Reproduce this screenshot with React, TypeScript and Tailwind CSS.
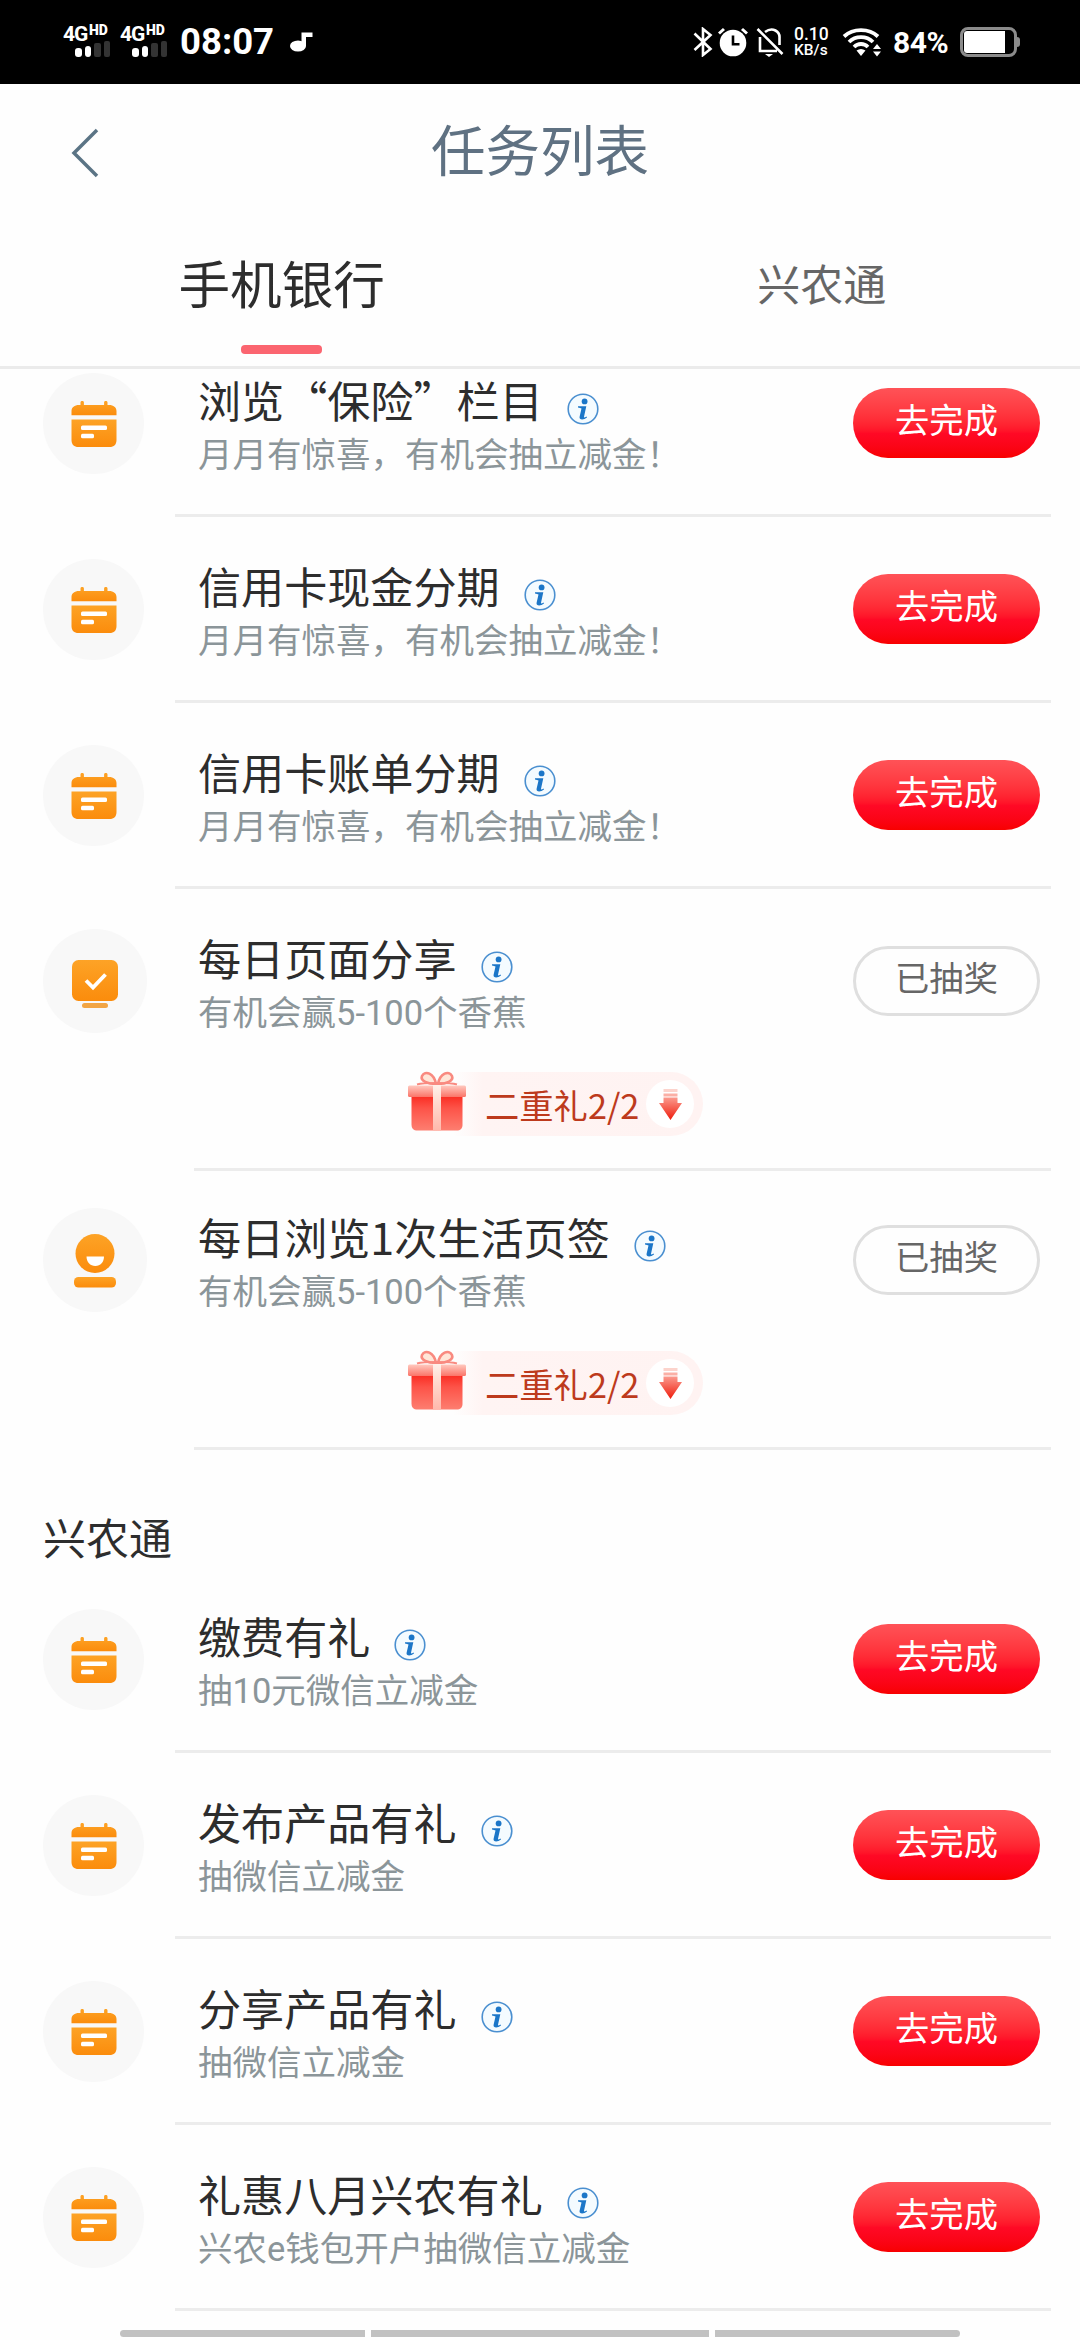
import { useState } from "react";

type IconName = "calendar" | "screen" | "smile";

interface Task {
  id: number;
  title: string;
  desc: string;
  icon: IconName;
  done?: boolean;
  gift?: string;
}

const bankTasks: Task[] = [
  { id: 1, title: "浏览“保险”栏目", desc: "月月有惊喜，有机会抽立减金！", icon: "calendar" },
  { id: 2, title: "信用卡现金分期", desc: "月月有惊喜，有机会抽立减金！", icon: "calendar" },
  { id: 3, title: "信用卡账单分期", desc: "月月有惊喜，有机会抽立减金！", icon: "calendar" },
  { id: 4, title: "每日页面分享", desc: "有机会赢5-100个香蕉", icon: "screen", done: true, gift: "二重礼2/2" },
  { id: 5, title: "每日浏览1次生活页签", desc: "有机会赢5-100个香蕉", icon: "smile", done: true, gift: "二重礼2/2" },
];

const farmTasks: Task[] = [
  { id: 6, title: "缴费有礼", desc: "抽10元微信立减金", icon: "calendar" },
  { id: 7, title: "发布产品有礼", desc: "抽微信立减金", icon: "calendar" },
  { id: 8, title: "分享产品有礼", desc: "抽微信立减金", icon: "calendar" },
  { id: 9, title: "礼惠八月兴农有礼", desc: "兴农e钱包开户抽微信立减金", icon: "calendar" },
];

function Gradients() {
  return (
    <svg width="0" height="0" className="absolute">
      <defs>
        <linearGradient id="orange" x1="0" y1="0" x2="0" y2="1">
          <stop offset="0" stopColor="#fda326" />
          <stop offset="1" stopColor="#fb8c0c" />
        </linearGradient>
        <linearGradient id="lid" x1="0" y1="0" x2="0" y2="1">
          <stop offset="0" stopColor="#ffc9bf" />
          <stop offset="1" stopColor="#fb7468" />
        </linearGradient>
        <linearGradient id="box" x1="0" y1="0" x2="0" y2="1">
          <stop offset="0" stopColor="#fa2c22" />
          <stop offset="0.35" stopColor="#fd5348" />
          <stop offset="1" stopColor="#fd7e70" />
        </linearGradient>
        <linearGradient id="ribbon" x1="0" y1="0" x2="0" y2="1">
          <stop offset="0" stopColor="#fff1ea" />
          <stop offset="0.4" stopColor="#ffd9ce" />
          <stop offset="1" stopColor="#ffb9ac" />
        </linearGradient>
        <linearGradient id="arrow" x1="0" y1="0" x2="0" y2="1">
          <stop offset="0" stopColor="#fb9a8e" />
          <stop offset="1" stopColor="#ef1c0c" />
        </linearGradient>
      </defs>
    </svg>
  );
}

function Signal() {
  return (
    <div className="flex w-[47px] flex-col font-[Roboto] text-white">
      <div className="flex h-[16px] items-start">
        <span className="w-[26px] text-[21px] leading-[18px] font-bold tracking-[-1px]">4G</span>
        <span className="text-[14px] leading-[11px] font-black">HD</span>
      </div>
      <div className="ml-[12px] flex h-[16px] items-end gap-[3px]">
        <i className="h-[9px] w-[6.5px] rounded-[3px] bg-white" />
        <i className="h-[11px] w-[6.5px] rounded-[3px] bg-white" />
        <i className="h-[14px] w-[6.5px] rounded-[2px] bg-[#333]" />
        <i className="h-[16px] w-[6.5px] rounded-[2px] bg-[#333]" />
      </div>
    </div>
  );
}

function StatusBar() {
  return (
    <header className="flex h-[84px] shrink-0 items-center bg-black pl-[63px] font-[Roboto] text-white">
      <div className="flex gap-[10px] pb-[3px]">
        <Signal />
        <Signal />
      </div>
      <span className="ml-[13px] w-[96px] text-[36.5px] leading-[84px] font-bold">08:07</span>
      <svg width="24" height="20" viewBox="0 0 24 20" fill="#fff" className="ml-[13px]">
        <ellipse cx="9" cy="14" rx="8" ry="5.6" />
        <path d="M12.5 0.5h11v4.5h-6.5v9h-4.5z" />
      </svg>
      <div className="ml-auto flex items-center pr-[60px]">
        <svg width="20" height="30" viewBox="0 0 20 30" fill="none" stroke="#fff" strokeWidth="2.6">
          <path d="M1.5 6.500l16 15.500-7.500 6V2l7.500 6L1.500 23" />
        </svg>
        <svg width="30" height="30" viewBox="0 0 30 30" className="ml-[5px]">
          <circle cx="15" cy="16" r="13.3" fill="#fff" />
          <path d="M1 6.500l5-4.500M29 6.500L24 2" stroke="#fff" strokeWidth="3" />
          <path d="M15 8.500v8.800h6.500" stroke="#000" strokeWidth="2.6" fill="none" />
        </svg>
        <svg width="28" height="30" viewBox="0 0 28 30" className="ml-[8px]" fill="none" stroke="#fff" strokeWidth="2.6">
          <path d="M1.500 2l25 25M4 10v14h17M9 5c8-6 15 0 14.500 6v7" />
          <path d="M9 27h8l-4 3z" fill="#fff" stroke="none" />
        </svg>
        <div className="ml-[10px] flex w-[36px] flex-col text-[17.5px] leading-[16px] font-medium">
          <span>0.10</span>
          <span className="text-[15.5px]">KB/s</span>
        </div>
        <svg width="40" height="30" viewBox="0 0 40 30" className="ml-[12px]" fill="none" stroke="#fff" strokeWidth="3.8">
          <path d="M2 9.500c9-8.500 25-8.500 34 0M7 15c6.500-6.500 17.500-6.500 24 0M12 20c4-4 10-4 14 0" />
          <path d="M14.500 23.500c3-2 6-2 9 0L19 29z" fill="#fff" stroke="none" />
          <path d="M31 22l4-5 4 5zM31 24.500l4 5 4-5z" fill="#fff" stroke="none" />
        </svg>
        <span className="ml-[11px] w-[60px] text-[30px] font-bold tracking-[-0.5px]">84%</span>
        <div className="ml-[7px] flex h-[30px] w-[57px] rounded-[8px] border-[3px] border-[#8b8b8b] p-[1px]">
          <i className="w-[41px] rounded-l-[3px] bg-white" />
        </div>
        <i className="h-[10px] w-[3px] rounded-r bg-[#8b8b8b]" />
      </div>
    </header>
  );
}

function TaskIcon({ name }: { name: IconName }) {
  if (name === "calendar") {
    return (
      <div className="mt-[42px] flex h-[101px] w-[101px] items-center justify-center rounded-full bg-[#f8f8f8]">
        <svg width="46" height="46" viewBox="0 0 46 46" className="mt-[1px]">
          <path
            d="M9.500 1.200c0-1.600 3.400-1.600 3.400 0V4h20.200V1.200c0-1.600 3.400-1.600 3.400 0V4H38c4.500 0 7.500 2.500 7.500 6v4.200H.5V10C.5 6.500 3.500 4 8 4h1.500z"
            fill="url(#orange)"
          />
          <path d="M.5 18.500h45V39c0 4.500-2.500 7-7 7h-31c-4.500 0-7-2.500-7-7z" fill="url(#orange)" />
          <rect x="10" y="24.500" width="26" height="4.600" rx="1.500" fill="#fff" />
          <rect x="10" y="32.700" width="13" height="4.600" rx="1.500" fill="#fff" />
        </svg>
      </div>
    );
  }
  return (
    <div className="mt-[40px] flex h-[104px] w-[104px] items-center justify-center rounded-full bg-[#f8f8f8]">
      {name === "screen" ? (
        <svg width="46" height="48" viewBox="0 0 46 48" className="mt-[6px]">
          <rect width="46" height="41" rx="6.500" fill="url(#orange)" />
          <path d="M14 20.500l7 7 12.500-13" fill="none" stroke="#fff" strokeWidth="3.800" />
          <rect x="10" y="43" width="26" height="5" rx="2.500" fill="#f2a544" />
        </svg>
      ) : (
        <svg width="42" height="54" viewBox="0 0 42 54" className="mt-[2px]">
          <circle cx="21" cy="19.500" r="19.500" fill="url(#orange)" />
          <path d="M12.500 22.500h17.500c0 5.500-3.500 9.500-8.700 9.500s-8.800-4-8.800-9.500z" fill="#fff" />
          <rect y="43" width="42" height="10.500" rx="4.500" fill="url(#orange)" />
        </svg>
      )}
    </div>
  );
}

function InfoIcon() {
  return (
    <svg width="32" height="32" viewBox="0 0 32 32" className="mt-[21px] ml-[24px]">
      <circle cx="16" cy="16" r="14.800" fill="#f4fbff" stroke="#4a8fd0" strokeWidth="1.600" />
      <circle cx="17.600" cy="8.400" r="2.900" fill="#1b76c8" />
      <path
        d="M11 13.200h8.300L17 23.800c-.2 1 .8.900 2.500-.3l.5 1c-3.200 2.800-8.200 2.700-7.400-.8l1.900-8.200c-.8-.6-2-.9-3.500-1.100z"
        fill="#1b76c8"
      />
    </svg>
  );
}

function GiftBadge({ label }: { label: string }) {
  return (
    <div className="mt-[33px] ml-[209px] flex h-[66px] w-[296px] items-center">
      <svg width="60" height="62" viewBox="0 0 60 62" className="z-10 mb-[4px]">
        <path
          d="M29 13C21 13 13 10 15 5c3-6 12-3 14 8zM31 13c8 0 16-3 14-8-3-6-12-3-14 8z"
          fill="#ffe6d8"
          stroke="#f98a80"
          strokeWidth="2.600"
        />
        <path d="M10 13.500c7-2 33-2 40 0" stroke="#f98a80" strokeWidth="2" fill="none" />
        <path d="M4.500 25h51v28.500c0 4-2 6-6 6h-39c-4 0-6-2-6-6z" fill="url(#box)" />
        <rect x="1" y="14.500" width="58" height="11.500" rx="1.500" fill="url(#lid)" />
        <rect x="26" y="14" width="8" height="45.500" fill="url(#ribbon)" />
      </svg>
      <div className="-ml-[14px] flex h-[64px] flex-1 items-center rounded-r-full bg-linear-to-r from-[#fefefe] via-[#fff4f3] via-12% to-[#fff3f2] pl-[32px]">
        <span className="w-[154px] text-[34.3px] leading-[50px] whitespace-nowrap text-[#bd3a1c]">{label}</span>
        <i className="ml-[7px] flex h-[48px] w-[48px] items-center justify-center rounded-full bg-white">
          <svg width="24" height="31" viewBox="0 0 24 31">
            <path d="M5.500 0h14v3h-14z" fill="#fcd3cc" />
            <path d="M5.500 4.500h14v3h-14z" fill="#fbb0a6" />
            <path d="M5.500 8.500h14V14H24L12.500 31 1 14h4.500z" fill="url(#arrow)" />
          </svg>
        </i>
      </div>
    </div>
  );
}

function TaskRow({ task }: { task: Task }) {
  return (
    <li className={task.gift ? "h-[279px] shrink-0 pl-[43px]" : "h-[186px] shrink-0 pl-[43px]"}>
      <div className={task.gift ? "flex h-[279px]" : "flex h-[183px]"}>
        <div className="w-[155px] shrink-0">
          <TaskIcon name={task.icon} />
        </div>
        <div className="w-[655px] shrink-0 pt-[41px]">
          <div className="flex h-[58px]">
            <h3 className="text-[43.1px] leading-[54px] whitespace-nowrap text-[#2d2d2d]">{task.title}</h3>
            <InfoIcon />
          </div>
          <p className="h-[50px] font-[Roboto,'Noto_Sans_CJK_SC',sans-serif] text-[34.5px] leading-[50px] whitespace-nowrap text-[#8b9599]">
            {task.desc}
          </p>
          {task.gift && <GiftBadge label={task.gift} />}
        </div>
        {task.done ? (
          <button className="mt-[57px] flex h-[70px] w-[187px] items-center justify-center rounded-full border-[3px] border-[#dfdfdf] pb-[8px] text-[34.3px] text-[#666]">
            已抽奖
          </button>
        ) : (
          <button className="mt-[57px] flex h-[70px] w-[187px] items-center justify-center rounded-full bg-linear-to-b from-[#ff5257] via-[#ff0925] via-65% to-[#f80000] pb-[9px] text-[34.3px] text-white">
            去完成
          </button>
        )}
      </div>
      <hr
        className={
          task.gift
            ? "mr-[29px] ml-[151px] border-t-[3px] border-[#ececec]"
            : "mr-[29px] ml-[132px] border-t-[3px] border-[#ececec]"
        }
      />
    </li>
  );
}

export default function App() {
  const [tab, setTab] = useState("手机银行");

  return (
    <main
      lang="zh-CN"
      className="flex h-[2340px] w-[1080px] flex-col overflow-hidden bg-[#fefefe] font-['Noto_Sans_CJK_SC',sans-serif]"
    >
      <Gradients />
      <StatusBar />

      <div className="flex h-[134px] shrink-0 items-center pl-[70px]">
        <svg width="30" height="50" viewBox="0 0 30 50" fill="none" stroke="#5b7485" strokeWidth="3.500" className="mt-[4px]">
          <path d="M27 2L4 25l23 23" />
        </svg>
        <h1 className="ml-[331px] pb-[6px] text-[54.5px] leading-[60px] text-[#5f7182]">任务列表</h1>
      </div>

      <nav className="flex h-[151px] shrink-0 border-b-[3px] border-[#ebebeb]">
        <button onClick={() => setTab("手机银行")} className="flex w-[565px] flex-col items-center pt-[34px]">
          <span className="text-[51.6px] leading-[60px] text-[#2d2d2d]">手机银行</span>
          {tab === "手机银行" && <i className="mt-[33px] h-[9px] w-[81px] rounded-[4px] bg-[#fb6570]" />}
        </button>
        <button onClick={() => setTab("兴农通")} className="flex w-[518px] flex-col items-center pt-[34px]">
          <span className="text-[43px] leading-[60px] text-[#666]">兴农通</span>
          {tab === "兴农通" && <i className="mt-[33px] h-[9px] w-[81px] rounded-[4px] bg-[#fb6570]" />}
        </button>
      </nav>

      <div className="h-[1950px] shrink-0 overflow-hidden">
        {/* list is scrolled a little under the tabs */}
        <ul className="-mt-[38px] flex flex-col">
          {bankTasks.map((t) => (
            <TaskRow key={t.id} task={t} />
          ))}
        </ul>
        <h2 className="h-[120px] pt-[59px] pl-[43px] text-[43px] leading-[60px] text-[#2d2d2d]">兴农通</h2>
        <ul className="flex flex-col">
          {farmTasks.map((t) => (
            <TaskRow key={t.id} task={t} />
          ))}
        </ul>
      </div>

      <footer className="flex justify-center gap-[6px] pt-[11px]">
        <i className="h-[7px] w-[245px] rounded-l-full bg-[#c1c1c1]" />
        <i className="h-[7px] w-[338px] bg-[#c1c1c1]" />
        <i className="h-[7px] w-[245px] rounded-r-full bg-[#c1c1c1]" />
      </footer>
    </main>
  );
}
